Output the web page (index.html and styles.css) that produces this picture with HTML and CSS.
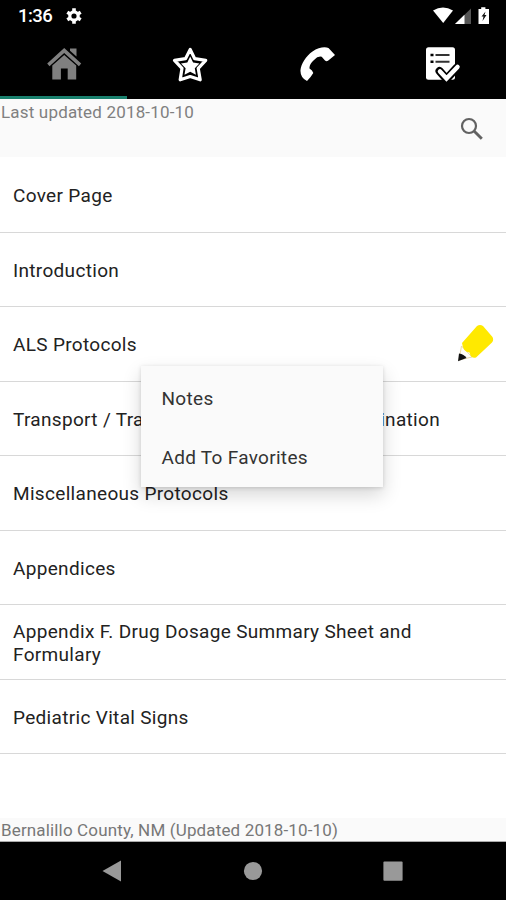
FILE: index.html
```html
<!DOCTYPE html>
<html lang="en">
<head>
<meta charset="utf-8">
<title>Protocols</title>
<link rel="stylesheet" href="styles.css">
</head>
<body>
<div class="screen">
  <header class="status">
    <span class="clock">1:36</span>
    <svg class="gear" width="16" height="16" viewBox="0 0 16 16"><circle cx="8" cy="8" r="4.2" fill="none" stroke="#fff" stroke-width="3.2"/><path d="M8 .3v3M8 12.7v3M1.3 4.2l2.6 1.5M12.1 10.3l2.6 1.5M1.3 11.8l2.6-1.5M12.1 5.7l2.6-1.5" stroke="#fff" stroke-width="3.6"/></svg>
    <svg class="signals" width="58" height="18" viewBox="0 0 58 18"><path d="M0 3.6Q10 -2.4 20 3.6L10.2 16z" fill="#fff"/><path d="M22 17L38 1.5V17z" fill="#555"/><path d="M22 17L31.5 7.8V17z" fill="#fff"/><path d="M45.5 2h2.7V.3h4.2V2H56v15H45.500z" fill="#fff"/><path d="M52.500 4.500l-4 5h2l-1 4.500 4-6h-2z" fill="#111"/></svg>
  </header>
  <nav class="tabs">
    <a class="tab active"><svg width="36" height="36" viewBox="0 0 36 36"><g fill="#808080"><path d="M18.200 1L1.200 16.500l2.300 2.700L18.200 6l14.700 13.200 2.300-2.700z"/><path d="M24 1.500h6.500v8L24 3.800z"/><path d="M6.300 18.600L18.200 8l12 10.600V32.500h-8.500V21.500h-6.800v11H6.300z"/></g></svg></a>
    <a class="tab"><svg width="36" height="36" viewBox="0 0 36 36"><path d="M18.200 2.500l4.500 9.200 11 1.600-7.500 8 2 11.500-10-3.200-10 3.200 1.800-11.500-7.500-8 11-1.600z" fill="none" stroke="#fff" stroke-width="3.200" stroke-linejoin="round"/><path d="M18.200 9.500l2.900 6.100 6.300 1-4.600 4.700 1.100 6.500-5.700-3.100-5.700 3.100 1.100-6.500L9 16.600l6.300-1z" fill="#fff"/></svg></a>
    <a class="tab"><svg width="36" height="36" viewBox="0 0 36 36"><path d="M1.500 23C2 17 7 9 13.500 4.500C19.500.2 26-.5 29.500 1L36 8Q33 10.500 29 13.700Q27.500 14.700 26 13.500L22.700 9.800Q19 8.800 15 13Q10 17.500 10.500 21.500Q13.500 23 14.300 26Q12 30 8 34Q1 30.500 1.500 23z" fill="#fff"/></svg></a>
    <a class="tab"><svg width="36" height="36" viewBox="0 0 36 36"><rect x="1" y=".2" width="29" height="32.500" rx="2.500" fill="#fff"/><path d="M5.500 8h3M5.500 14.700h3" stroke="#000" stroke-width="2.400"/><path d="M10.500 8h14M10.500 14.700h14" stroke="#333" stroke-width="2"/><path d="M14.500 24l7 8L32 20.500" fill="none" stroke="#000" stroke-width="8" stroke-linecap="round" stroke-linejoin="round"/><path d="M15 24.500l6.500 7L32.500 20" fill="none" stroke="#fff" stroke-width="4.500" stroke-linecap="round"/></svg></a>
  </nav>
  <div class="search">
    <span class="updated">Last updated 2018-10-10</span>
    <svg class="magnifier" width="24" height="24" viewBox="0 0 24 24" fill="none" stroke="#626262"><circle cx="9" cy="9" r="7" stroke-width="2.200"/><path d="M14 14l7.800 7.800" stroke-width="2.900"/></svg>
  </div>
  <main class="list">
    <div class="row">Cover Page</div>
    <div class="row">Introduction</div>
    <div class="row">ALS Protocols
      <svg class="pencil" width="38" height="40" viewBox="0 0 38 40"><path d="M3 37L5.500 23 16 34z" fill="#fffdf5" stroke="#e8d9a8" stroke-width="1"/><path d="M2 38.200L3 30.500Q8 31 10.500 35z" fill="#111"/><path d="M6 20L21 3Q24 1 27 3L36.500 14Q38 17 36 19.500L20 34.500Q15 36 13.500 29.500Q7 29 6 20z" fill="#ffe900"/></svg>
    </div>
    <div class="row split"><span>Transport / Tra</span><span>ination</span></div>
    <div class="row">Miscellaneous Protocols</div>
    <div class="row">Appendices</div>
    <div class="row">Appendix F. Drug Dosage Summary Sheet and Formulary</div>
    <div class="row">Pediatric Vital Signs</div>
  </main>
  <footer class="county">Bernalillo County, NM (Updated 2018-10-10)</footer>
  <div class="navbar">
    <svg width="20" height="22" viewBox="0 0 20 22"><path d="M.5 11L19 .5v21z" fill="#999"/></svg>
    <svg width="20" height="22" viewBox="0 0 20 22"><circle cx="10" cy="11" r="9.100" fill="#999"/></svg>
    <svg width="20" height="22" viewBox="0 0 20 22"><rect x=".4" y="1.500" width="19.200" height="19.200" rx="1" fill="#999"/></svg>
  </div>
  <div class="menu">
    <div class="item">Notes</div>
    <div class="item">Add To Favorites</div>
  </div>
</div>
</body>
</html>
```
FILE: styles.css
```css
* { box-sizing: border-box; }
body { margin: 0; font-family: Roboto, sans-serif; background: #fff; }
svg { display: block; flex: none; }
.screen { position: relative; width: 506px; height: 900px; display: flex; flex-direction: column; overflow: hidden; }
.status { flex: none; height: 32px; background: #000; color: #fff; display: flex; align-items: center; padding: 0 15px 0 18px; }
.clock { font-size: 18.5px; font-weight: 500; line-height: 32px; width: 48px; letter-spacing: -.55px; }
.signals { margin-left: auto; margin-top: -1px; }
.tabs { flex: none; height: 66.500px; background: #000; display: grid; grid-template-columns: repeat(4, 1fr); }
.tab { display: flex; justify-content: center; padding-top: 15px; padding-left: 1px; border-bottom: 3px solid #000; }
.tab.active { border-color: #19806d; }
.search { flex: none; height: 58.500px; background: #fafafa; display: flex; justify-content: space-between; padding: 2px 22px 0 1px; color: #808080; }
.updated { font-size: 17px; line-height: 22px; letter-spacing: .18px; }
.magnifier { margin-top: 16px; }
.list { flex: 1; padding-top: 1px; color: #222; font-size: 19px; line-height: 23px; letter-spacing: .32px; }
.row { height: 74.500px; border-bottom: 1px solid #d8d8d8; padding: 2px 13px 0; display: flex; align-items: center; }
.row.split { justify-content: space-between; padding-right: 66px; }
.pencil { margin-left: auto; margin-right: -1px; margin-top: -3px; }
.county { flex: none; height: 24px; background: #fafafa; border-bottom: 1px solid #aaa; color: #777; font-size: 17px; line-height: 25px; letter-spacing: .15px; padding-left: 1px; }
.navbar { flex: none; height: 58px; background: #000; display: flex; justify-content: space-between; align-items: center; padding: 0 103px 0 102px; }
.menu { position: absolute; left: 141px; top: 366px; width: 242px; height: 121px; background: #fafafa; padding: 3px 0 0 20.500px; color: #333; font-size: 19px; letter-spacing: .3px; box-shadow: 0 8px 18px rgba(0,0,0,.16), 0 1px 4px rgba(0,0,0,.14); }
.item { height: 59px; line-height: 59px; }
```
